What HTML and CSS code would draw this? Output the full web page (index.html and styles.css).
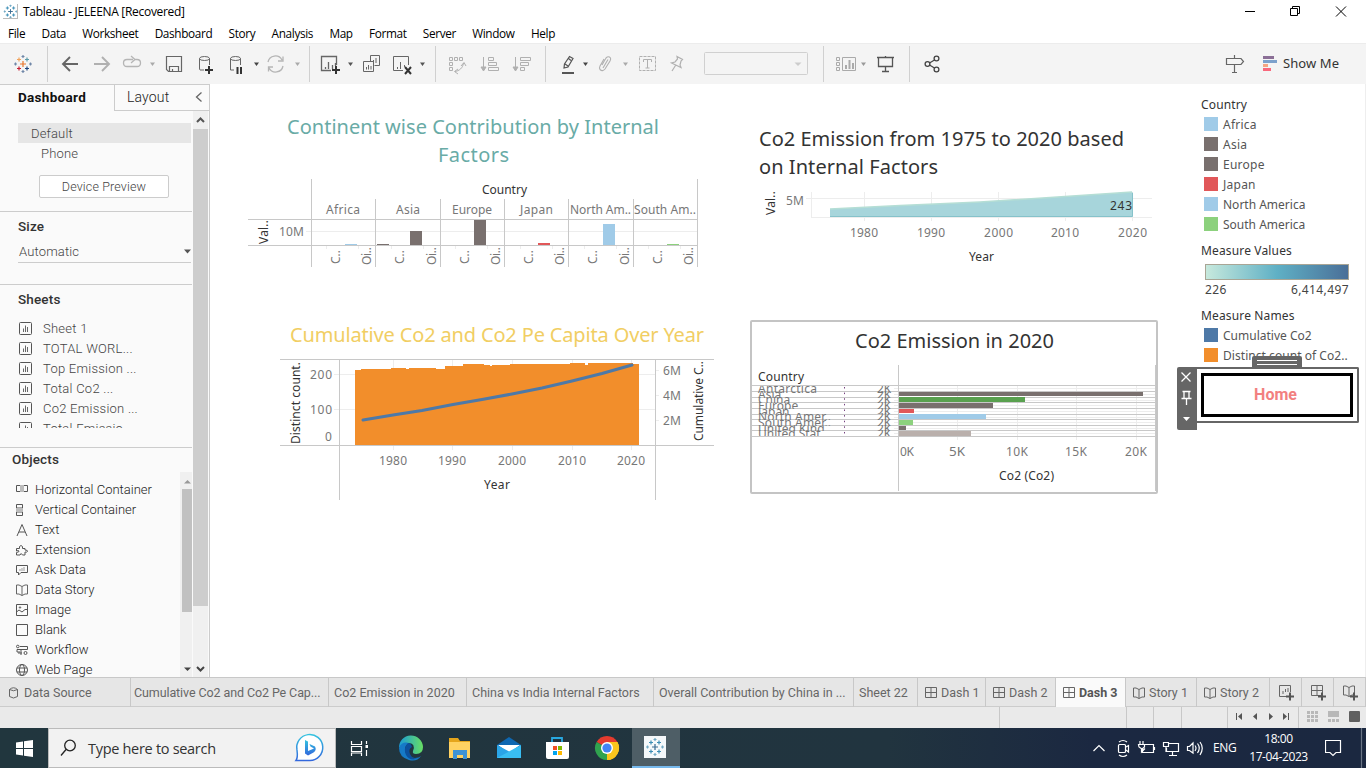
FILE: index.html
```html
<!DOCTYPE html>
<html lang="en">
<head>
<meta charset="utf-8">
<title>Tableau - JELEENA [Recovered]</title>
<link rel="stylesheet" href="styles.css">
</head>
<body>
<svg class="defs" width="0" height="0">
  <symbol id="sheet" viewBox="0 0 14 14"><rect x=".5" y=".5" width="12" height="12" rx="1" fill="none" stroke="#555"/><path d="M4.5 6.5V10M6.5 3.500V10M8.500 5V10" stroke="#666" fill="none"/></symbol>
  <symbol id="dash" viewBox="0 0 12 12"><path d="M.5.5H11.500V10.500H.5ZM6 .5V10.500M.5 5.500H11.500" fill="none" stroke="#666"/></symbol>
  <symbol id="story" viewBox="0 0 12 12"><path d="M.5 1H3L6 2.500 9 1H11.500V10H9L6 11.500 3 10H.5ZM6 2.500V11.500" fill="none" stroke="#666"/></symbol>
  <symbol id="flake" viewBox="0 0 18 18"><g stroke-width="1.200"><path d="M6 9H12M9 6V12" stroke="var(--c1)"/><path d="M3 4.500H7M5 2.500V6.500" stroke="var(--c2)"/><path d="M11 4.500H15M13 2.500V6.500" stroke="var(--c3)"/><path d="M3 13.500H7M5 11.500V15.500" stroke="var(--c4)"/><path d="M11 13.500H15M13 11.500V15.500" stroke="var(--c5)"/><path d="M7.500 1.500H10.500M9 0V3M7.500 16.500H10.500M9 15V18M0 9H3M1.500 7.500V10.500M15 9H18M16.500 7.500V10.500" stroke="var(--c6)"/></g></symbol>
</svg>
<div class="app">
  <header class="titlebar">
    <svg class="app-icon blue" width="15" height="15"><use href="#flake" x=".5" y=".5" width="14" height="14"/></svg>
    <span>Tableau - JELEENA [Recovered]</span>
    <svg class="win-controls" width="110" height="22" viewBox="1240 0 110 22" fill="none" stroke="#000"><path d="M1245 10.500H1255M1290.500 7.500H1297.500V14.500H1290.500ZM1292.500 7.500V5.500H1299.500V12.500H1297.500M1336 5.500L1346 15.500M1346 5.500L1336 15.500"/></svg>
  </header>
  <nav class="menu"><span>File</span><span>Data</span><span>Worksheet</span><span>Dashboard</span><span>Story</span><span>Analysis</span><span>Map</span><span>Format</span><span>Server</span><span>Window</span><span>Help</span></nav>
  <div class="toolbar">
    <div class="group g0"><svg class="multi" width="18" height="18"><use href="#flake" width="18" height="18"/></svg></div>
    <svg class="group" width="262" height="36" viewBox="48 46 261 36" fill="none" stroke="#666">
      <path d="M78 64H63M70 57L63 64L70 71" stroke-width="1.900"/><path d="M94 64H109M102 57L109 64L102 71" stroke="#b0b0b0" stroke-width="1.900"/>
      <path d="M133 59.500H127Q123.500 59.500 123.500 63T127 66.500H137Q140.500 66.500 140.500 63T137 59.500H135M131 56L135 59.500L131 63" stroke="#b5b5b5" stroke-width="1.300"/>
      <path d="M166.500 56.500H181.500V71.500H168.500L166.500 69.500ZM169.500 71.500V66.500H178.500V71.500M172.500 69V71.500" stroke-width="1.200"/>
      <path d="M204 70H200Q199.500 70 199.500 68V58.500M209.500 58.500V65" /><ellipse cx="204.500" cy="58.500" rx="5" ry="2"/><path d="M205 70H213M209 66V74" stroke="#333" stroke-width="2"/>
      <path d="M234 70H230.500V58.500M240.500 58.500V65"/><ellipse cx="235.500" cy="58.500" rx="5" ry="2"/><path d="M237.500 67V74M241 67V74" stroke="#333" stroke-width="2"/>
      <path d="M268 62A7.500 7.500 0 0 1 282 60M283 66A7.500 7.500 0 0 1 269 68M278 61H283V56.500M273 67H268.500V71.500" stroke="#b5b5b5" stroke-width="1.300"/>
      <g fill="#aaa" stroke="none"><path d="M150 62.500H155L152.500 66Z"/><path d="M295 62.500H300L297.500 66Z"/><path d="M254 62.500H259L256.500 66Z" fill="#444"/></g>
    </svg>
    <svg class="group" width="126" height="36" viewBox="310 46 125 36" fill="none" stroke="#666">
      <path d="M331 70.500H321.500V56.500H336.500V65M325.500 67V69M328.500 62V69M332.500 65V69M335.500 63V66" stroke-width="1.300"/><path d="M332 70H340M336 66V74" stroke="#333" stroke-width="2"/>
      <path d="M370.500 61V55.500H379.500V65.500H374.500M363.500 61.500H373.500V71.500H363.500ZM366.500 67V69.500M368.500 65V69.500M371 66V69.500M373.500 60V62M376 58V63" />
      <path d="M403 70.500H393.500V56.500H408.500V65M397.500 67V69M400.500 62V69M404.500 65V67"/><path d="M405 67L411 74M411 67L405 74" stroke="#333" stroke-width="2"/>
      <path d="M348 62.500H353L350.500 66ZM420 62.500H425L422.500 66Z" fill="#555" stroke="none"/>
    </svg>
    <svg class="group" width="110" height="36" viewBox="436 46 109 36" fill="none" stroke="#b0b0b0">
      <path d="M449.500 57.500H452.500V60.500H449.500ZM454.500 57.500H457.500V60.500H454.500ZM459.500 57.500H462.500V60.500H459.500ZM449.500 62.500H452.500V65.500H449.500ZM449.500 67.500H452.500V70.500H449.500ZM463.500 63C463 68 459 71 455 71.500M461 66L464 62.500L466 66M458 69L454.500 71.500L458 74"/>
      <path d="M483.500 57V70M488.500 57.500H493.500V60.500H488.500ZM488.500 62.500H496.500V65.500H488.500ZM488.500 67.500H498.500V70.500H488.500ZM515.500 57V70M520.500 57.500H530.500V60.500H520.500ZM520.500 62.500H528.500V65.500H520.500ZM520.500 67.500H524.500V70.500H520.500Z"/><path d="M481 67H486L483.500 71ZM513 67H518L515.500 71Z" fill="#b0b0b0"/>
    </svg>
    <svg class="group" width="278" height="36" viewBox="546 46 277 36" fill="none" stroke="#b0b0b0">
      <path d="M564 68L564.500 64L569.500 56.500L573 58.500L568 67ZM565 64L568 66M568.500 58.500L571 60.500" stroke="#555" stroke-width="1.200"/><path d="M562 73H574" stroke="#555" stroke-width="2"/>
      <path d="M602 65L606 58Q608.500 55.500 610.500 58Q611 59 610 61L605 69Q602.500 72 600 69.500Q599 68 600 66L604 59M603 68L608 59.500" stroke-width="1.100"/>
      <rect x="639.500" y="56.500" width="16" height="14" stroke-dasharray="3 1"/><path d="M643.500 62V59.500H651.500V62M647.500 59.500V68M645.500 68H649.500"/>
      <path d="M677 56.500L682.500 59.500L681 61L680 65L681 67.500L671.500 63L675 62L677.500 59ZM675.500 65.500L672 71" stroke-width="1.200"/>
      <rect x="704.500" y="52.500" width="103" height="22" rx="1" stroke="#d0d0d0"/><path d="M794.500 62.500H801.500L798 66Z" fill="#ccc" stroke="none"/>
      <path d="M583 62.500H588L585.500 66Z" fill="#444" stroke="none"/><path d="M623 62.500H628L625.500 66Z" fill="#aaa" stroke="none"/>
    </svg>
    <svg class="group" width="86" height="36" viewBox="824 46 85 36" fill="none" stroke="#aaa">
      <path d="M836.500 57.500H839.500V60.500H836.500ZM836.500 62.500H839.500V65.500H836.500ZM836.500 67.500H839.500V70.500H836.500ZM842.500 57.500H855.500V70.500H842.500Z"/><path d="M846 69V65M849.500 69V60M853 69V63" stroke-width="2"/><path d="M861 62.500H866L863.500 66Z" fill="#999" stroke="none"/>
      <path d="M877 57.500H894M885.500 56V58M878.500 58V66.500H892.500V58M885.500 67V71.500M882 71.500H889" stroke="#555" stroke-width="1.300"/>
    </svg>
    <svg class="group share" width="60" height="36" viewBox="910 46 60 36" fill="none" stroke="#444" stroke-width="1.300"><circle cx="927.500" cy="64" r="2.400"/><circle cx="936.500" cy="58.500" r="2.400"/><circle cx="936.500" cy="69.500" r="2.400"/><path d="M929.500 63L934.500 60M929.500 65L934.500 68"/></svg>
    <svg class="show-me" width="56" height="36" viewBox="1224 46 56 36"><path d="M1226.500 58.500H1241L1243.500 61.500L1241 64.500H1226.500ZM1234.500 55V58M1234.500 65V72.500M1232 72.500H1237" fill="none" stroke="#666" stroke-width="1.200"/><path d="M1263 56h11v3h-11z" fill="#8b6f96"/><path d="M1263 60h14v3h-14z" fill="#7ca1cc"/><path d="M1263 64h5v3h-5z" fill="#f4a582"/><path d="M1263 68h8v3h-8z" fill="#f9687c"/></svg>
    <span class="show-label">Show Me</span>
  </div>
  <main class="workspace">
    <aside class="pane">
      <div class="tabs"><b>Dashboard</b><span>Layout</span><svg width="8" height="12"><path d="M6.500 1.500L1.500 6L6.500 10.500" fill="none" stroke="#666" stroke-width="1.300"/></svg></div>
      <div class="pane-body">
        <div class="pane-content">
          <section class="devices"><div class="default">Default</div><div class="phone">Phone</div><div class="preview">Device Preview</div></section>
          <section class="size"><h2>Size</h2><div class="select"><span>Automatic</span><svg width="8" height="5"><path d="M1 .5H8L4.500 4.500Z" fill="#555"/></svg></div></section>
          <section class="sheets"><h2>Sheets</h2>
            <ul>
              <li><svg><use href="#sheet"/></svg><span>Sheet 1</span></li><li><svg><use href="#sheet"/></svg><span>TOTAL WORL...</span></li><li><svg><use href="#sheet"/></svg><span>Top Emission ...</span></li><li><svg><use href="#sheet"/></svg><span>Total Co2 ...</span></li><li><svg><use href="#sheet"/></svg><span>Co2 Emission ...</span></li><li><svg><use href="#sheet"/></svg><span>Total Emissio...</span></li>
            </ul>
          </section>
          <section class="objects"><h2>Objects</h2>
            <div class="object-scroll">
              <ul>
                <li><svg viewBox="0 0 12 12"><path d="M.5 1.500H4.500V7.500H.5ZM7.500 1.500H11.500V7.500H7.500Z"/><path d="M4 1h4v7H4z" fill="#bbb" stroke="none"/></svg>Horizontal Container</li>
                <li><svg viewBox="0 0 12 12"><path d="M.5.5H6.500V4H.5ZM.5 8H6.500V11.500H.5Z"/><path d="M0 4h7v4H0z" fill="#bbb" stroke="none"/></svg>Vertical Container</li>
                <li><svg viewBox="0 0 12 12"><path d="M1 12L6 .5L11 12M3 8H9"/></svg>Text</li>
                <li><svg viewBox="0 0 12 12"><path d="M.5 4.500H3.500V2.500Q5 .5 6.500 2.500V4.500H9V6Q12 6 11.500 7.500Q11 8.500 9 8V11H6.500Q5 8 4 11H.5V8.500Q3.500 8 3 7Q2 6 .5 7Z"/></svg>Extension</li>
                <li><svg viewBox="0 0 12 12"><path d="M.5 1.500H11.500V8.500H5L2.500 11V8.500H.5Z"/><path d="M4 7V5M6 7V4M8 7V3" stroke="#999"/></svg>Ask Data</li>
                <li><svg viewBox="0 0 12 12"><use href="#story" width="12" height="12"/></svg>Data Story</li>
                <li><svg viewBox="0 0 12 12"><path d="M.5 .5H11.500V11.500H.5ZM.5 8L3 6L6 8L9 5.500H11"/><circle cx="4" cy="3.500" r=".7"/></svg>Image</li>
                <li><svg viewBox="0 0 12 12"><path d="M.5 .5H11.500V11.500H.5Z"/></svg>Blank</li>
                <li><svg viewBox="0 0 12 12"><circle cx="1.800" cy="2.500" r="1.300"/><path d="M4 2.500H11.500V5.500H1V8H4M5 6V11M2 9H6"/><circle cx="9.500" cy="9" r="1.500"/></svg>Workflow</li>
                <li><svg viewBox="0 0 12 12"><circle cx="6" cy="6" r="5.500"/><ellipse cx="6" cy="6" rx="2.500" ry="5.500"/><path d="M1 4H11M1 8H11"/></svg>Web Page</li>
              </ul>
              <div class="scroll inner"><svg width="11" height="17"><path d="M4 11.500H11L7.500 8Z" fill="#999"/></svg><i></i><svg width="11" height="17"><path d="M4 8.500H11L7.500 12Z" fill="#444"/></svg></div>
            </div>
          </section>
        </div>
        <div class="scroll outer"><svg width="15" height="18"><path d="M4 11L7.500 7.500L11 11" fill="none" stroke="#555" stroke-width="2"/></svg><i></i><svg width="15" height="17"><path d="M4 7L7.500 10.500L11 7" fill="none" stroke="#444" stroke-width="2"/></svg></div>
      </div>
    </aside>
    <div class="dashboard">
      <svg class="chart" width="520" height="226" viewBox="210 84 520 226">
        <g class="title" fill="#69aba6"><text x="287" y="134" textLength="372">Continent wise Contribution by Internal</text><text x="438" y="162" textLength="71">Factors</text></g>
        <path class="grid" d="M306 231.500H697M326.500 246V249M358.500 246V249M391.500 246V249M423.500 246V249M455.500 246V249M487.500 246V249M520.500 246V249M552.500 246V249M584.500 246V249M616.500 246V249M648.500 246V249M680.500 246V249"/>
        <path d="M345 244h12v1h-12z M603 224h12v21h-12z" fill="#a0cbe8"/><path d="M377 244h12v1h-12z M410 231h12v14h-12z M474 220h12v25h-12z" fill="#79706e"/><path d="M538 243h12v2h-12z" fill="#e15759"/><path d="M667 244h12v1h-12z" fill="#8cd17d"/>
        <path class="axis" d="M311.500 179V267M697.500 179V267M375.500 199V267M440.500 199V267M504.500 199V267M568.500 199V267M633.500 199V267M248 219.500H698M248 245.500H698"/>
        <text class="dark" x="482" y="194" textLength="45">Country</text>
        <text x="326" y="214" textLength="34">Africa</text><text x="396" y="214" textLength="24">Asia</text><text x="452" y="214" textLength="40">Europe</text><text x="520" y="214" textLength="33">Japan</text><text x="570" y="214" textLength="61">North Am..</text><text x="634" y="214" textLength="62">South Am..</text>
        <text x="279" y="236" textLength="25">10M</text><text class="dark" transform="translate(268 244)rotate(-90)" textLength="24">Val..</text>
        <g><text transform="translate(340 264)rotate(-90)" textLength="14">C..</text><text transform="translate(371 265)rotate(-90)" textLength="18">Oi..</text><text transform="translate(404 264)rotate(-90)" textLength="14">C..</text><text transform="translate(436 265)rotate(-90)" textLength="18">Oi..</text><text transform="translate(469 264)rotate(-90)" textLength="14">C..</text><text transform="translate(500 265)rotate(-90)" textLength="18">Oi..</text><text transform="translate(533 264)rotate(-90)" textLength="14">C..</text><text transform="translate(564 265)rotate(-90)" textLength="18">Oi..</text><text transform="translate(597 264)rotate(-90)" textLength="14">C..</text><text transform="translate(629 265)rotate(-90)" textLength="18">Oi..</text><text transform="translate(662 264)rotate(-90)" textLength="14">C..</text><text transform="translate(693 265)rotate(-90)" textLength="18">Oi..</text></g>
      </svg>
      <svg class="chart" width="461" height="226" viewBox="730 84 461 226">
        <g class="title" fill="#333"><text x="759" y="146" textLength="365">Co2 Emission from 1975 to 2020 based</text><text x="759" y="174" textLength="179">on Internal Factors</text></g>
        <path class="grid" d="M806 198.500H1152M811 217.500H1152M811.500 192V217M864.500 192V221M931.500 192V221M998.500 192V221M1065.500 192V221M1132.500 192V221"/>
        <path d="M830 209L900 205.500L980 202L1050 197.500L1132.500 192V217H830Z" fill="#a7d5db"/><path d="M830 209L900 205.500L980 202L1050 197.500L1132 192" fill="none" stroke="#b5ded5" stroke-width="1.500"/><path d="M830 216.500H1132.500V193" fill="none" stroke="#86c2ca"/>
        <text x="786" y="205" textLength="18">5M</text><text class="dark" x="1110" y="210" textLength="22">243</text><text class="dark" transform="translate(775 215)rotate(-90)" textLength="24">Val..</text>
        <text x="850" y="237" textLength="28">1980</text><text x="917" y="237" textLength="28">1990</text><text x="984" y="237" textLength="29">2000</text><text x="1051" y="237" textLength="28">2010</text><text x="1118" y="237" textLength="29">2020</text><text class="dark" x="969" y="261" textLength="25">Year</text>
      </svg>
      <svg class="chart" width="520" height="367" viewBox="210 310 520 367">
        <text class="title" fill="#f1ce63" x="290" y="342" textLength="414">Cumulative Co2 and Co2 Pe Capita Over Year</text>
        <path class="grid" d="M334 374.500H655M334 409.500H655M655 370.500H659M655 395.500H659M655 420.500H659M393.500 360V450M452.500 360V450M512.500 360V450M572.500 360V450M631.500 360V450"/>
        <path d="M355 445V370H361V369H391V368H406V369H409V368H436V369H445V366H463V364H484V365H490V366H492V365H510V364H570V363H585V365H588V363H633V364H639V445Z" fill="#f28e2b"/>
        <path d="M363 420L393 415L422 410.500L453 404.500L482 399.500L512 394L542 388L572 381L602 373.500L632 365" fill="none" stroke="#4e79a7" stroke-width="3" stroke-linecap="round"/>
        <path class="axis" d="M280 359.500H714M280 445.500H714M339.500 360V500M655.500 360V500"/>
        <text x="310" y="379" textLength="22">200</text><text x="310" y="414" textLength="22">100</text><text x="325" y="441">0</text><text x="663" y="375" textLength="18">6M</text><text x="663" y="400" textLength="18">4M</text><text x="663" y="425" textLength="18">2M</text>
        <text x="379" y="465" textLength="28">1980</text><text x="438" y="465" textLength="28">1990</text><text x="498" y="465" textLength="28">2000</text><text x="558" y="465" textLength="28">2010</text><text x="617" y="465" textLength="28">2020</text><text class="dark" x="484" y="489" textLength="26">Year</text>
        <text class="dark" transform="translate(300 444)rotate(-90)" textLength="82">Distinct count.</text><text class="dark" transform="translate(703 441)rotate(-90)" textLength="80">Cumulative C..</text>
      </svg>
      <svg class="chart" width="461" height="367" viewBox="730 310 461 367">
        <defs><clipPath id="r0"><path d="M752 386h146v7H752z"/></clipPath><clipPath id="r1"><path d="M752 391h146v7H752z"/></clipPath><clipPath id="r2"><path d="M752 397h146v6H752z"/></clipPath><clipPath id="r3"><path d="M752 402h146v7H752z"/></clipPath><clipPath id="r4"><path d="M752 408h146v6H752z"/></clipPath><clipPath id="r5"><path d="M752 413h146v7H752z"/></clipPath><clipPath id="r6"><path d="M752 419h146v7H752z"/></clipPath><clipPath id="r7"><path d="M752 425h146v6H752z"/></clipPath><clipPath id="r8"><path d="M752 430h146v6H752z"/></clipPath></defs>
        <rect x="751" y="321" width="406" height="172" rx="1" fill="#fff" stroke="#c4c4c4" stroke-width="2"/>
        <text class="title" x="855" y="348" textLength="199" fill="#333">Co2 Emission in 2020</text><text class="dark" x="758" y="381" textLength="46">Country</text>
        <path class="grid" d="M957.500 386V440M1017.500 386V440M1076.500 386V440M1136.500 386V440M894 388.500H1155M894 394.500H1155M894 400.500H1155M894 405.500H1155M894 411.500H1155M894 417.500H1155M894 422.500H1155M894 428.500H1155M894 433.500H1155"/>
        <path class="axis" d="M752 385.500H1155M752 391.500H1155M752 397.500H1155M752 402.500H1155M752 408.500H1155M752 414.500H1155M752 419.500H1155M752 425.500H1155M752 430.500H1155M752 436.500H1155M898.500 365V491M1155.500 365V491"/>
        <path d="M899 392h244v4H899zM899 403h94v5H899zM899 426h7v4H899z" fill="#79706e"/><path d="M899 397h126v5H899z" fill="#59a14f"/><path d="M899 409h15v4H899z" fill="#e15759"/><path d="M899 414h87v5H899z" fill="#a0cbe8"/><path d="M899 420h14v5H899z" fill="#8cd17d"/><path d="M899 431h72v5H899z" fill="#bab0ac"/>
        <g><g clip-path="url(#r0)"><text x="758" y="393" textLength="59">Antarctica</text><text x="877" y="393">2K</text></g><g clip-path="url(#r1)"><text x="758" y="399">Asia</text><text x="877" y="399">2K</text></g><g clip-path="url(#r2)"><text x="758" y="404">China</text><text x="877" y="404">2K</text></g><g clip-path="url(#r3)"><text x="758" y="410">Europe</text><text x="877" y="410">2K</text></g><g clip-path="url(#r4)"><text x="758" y="416">Japan</text><text x="877" y="416">2K</text></g><g clip-path="url(#r5)"><text x="758" y="421" textLength="73">North Amer..</text><text x="877" y="421">2K</text></g><g clip-path="url(#r6)"><text x="758" y="427" textLength="73">South Amer..</text><text x="877" y="427">2K</text></g><g clip-path="url(#r7)"><text x="758" y="433" textLength="73">United King..</text><text x="877" y="433">2K</text></g><g clip-path="url(#r8)"><text x="758" y="438" textLength="69">United Stat..</text><text x="877" y="438">2K</text></g></g>
        <path d="M844.500 387V434" stroke="#764280" stroke-dasharray="1.500 4.120" fill="none"/>
        <text x="900" y="456" textLength="14">0K</text><text x="949" y="456" textLength="16" lengthAdjust="spacingAndGlyphs">5K</text><text x="1006" y="456" textLength="22">10K</text><text x="1065" y="456" textLength="22">15K</text><text x="1125" y="456" textLength="22">20K</text><text class="dark" x="999" y="480" textLength="55">Co2 (Co2)</text>
      </svg>
      <div class="legend">
        <h3>Country</h3>
        <ul><li><i class="sky"></i>Africa</li><li><i class="brown"></i>Asia</li><li><i class="brown"></i>Europe</li><li><i class="red"></i>Japan</li><li class="tight"><i class="sky"></i>North America</li><li class="tight"><i class="green"></i>South America</li></ul>
        <h3 class="mv">Measure Values</h3><div class="ramp"></div><div class="range"><span>226</span><span>6,414,497</span></div>
        <h3 class="mn">Measure Names</h3>
        <ul><li class="tight"><i class="navy"></i>Cumulative Co2</li><li class="full"><i class="orange"></i>Distinct count of Co2..</li></ul>
        <div class="floating"><svg width="50" height="13"><rect width="50" height="13" rx="2" fill="#666"/><path d="M5 4.500H45M5 8.500H45" stroke="#fff"/></svg>
          <div class="floating-row"><svg width="20" height="63"><path d="M2 0H20V63H2Q0 63 0 61V2Q0 0 2 0Z" fill="#666"/><path d="M4.500 5.500L13.500 14.500M13.500 5.500L4.500 14.500M5.500 24.500H13.500M7 24.500V31.500M12 24.500V31.500M4.500 31.500H14.500M9.500 32V38" fill="none" stroke="#fff" stroke-width="1.300"/><path d="M6 50H13L9.500 54Z" fill="#fff"/></svg><div class="home-wrap"><div class="home">Home</div></div></div>
        </div>
      </div>
    </div>
  </main>
  <div class="sheet-tabs">
    <span class="source"><svg width="10" height="12"><path d="M.5 2.500V9.500Q4.500 12.500 8.500 9.500V2.500Q4.500-1 .5 2.500Q4.500 5 8.500 2.500" fill="none" stroke="#666"/></svg>Data Source</span><span class="first">Cumulative Co2 and Co2 Pe Cap...</span><span>Co2 Emission in 2020</span><span>China vs India Internal Factors</span><span>Overall Contribution by China in ...</span><span>Sheet 22</span>
    <span class="ico"><svg width="12" height="12"><use href="#dash"/></svg>Dash 1</span><span class="ico"><svg width="12" height="12"><use href="#dash"/></svg>Dash 2</span><span class="ico active"><svg width="12" height="12"><use href="#dash"/></svg>Dash 3</span><span class="ico"><svg width="12" height="12"><use href="#story"/></svg>Story 1</span><span class="ico"><svg width="12" height="12"><use href="#story"/></svg>Story 2</span>
    <span class="new"><svg width="16" height="16"><path d="M7 11.500H.5V.5H11.500V7M4 9V6M6.500 7V4M9 7V3" fill="none" stroke="#666"/><path d="M7 11.500H15M11 7.500V15.500" stroke="#555" stroke-width="2"/></svg></span><span class="new"><svg width="16" height="16"><use href="#dash" width="12" height="12"/><path d="M7 11.500H15M11 7.500V15.500" stroke="#555" stroke-width="2"/></svg></span><span class="new"><svg width="16" height="16"><use href="#story" width="12" height="12"/><path d="M7 11.500H15M11 7.500V15.500" stroke="#555" stroke-width="2"/></svg></span>
  </div>
  <div class="status"><span></span><span></span><span></span><span></span><span></span><span><svg width="70" height="20" viewBox="1228 708 70 20" fill="#555"><path d="M1236 714h1v7h-1zM1242 714V721L1238 717.500ZM1257 714V721L1253 717.500ZM1269 714V721L1273 717.500ZM1283 714V721L1287 717.500ZM1288 714h1v7h-1z"/></svg></span><svg width="67" height="20" viewBox="1299 708 67 20" fill="#b8b8b8"><path d="M1307 712h3v3h-3zM1311 712h3v3h-3zM1315 712h3v3h-3zM1307 716h3v3h-3zM1311 716h3v3h-3zM1315 716h3v3h-3zM1307 720h3v3h-3zM1311 720h3v3h-3zM1315 720h3v3h-3zM1328 712h11v6h-11zM1328 720h3v3h-3zM1332 720h3v3h-3zM1336 720h3v3h-3z"/><rect x="1349" y="712" width="11" height="11" rx="1" fill="#606060"/></svg></div>
  <footer class="taskbar">
    <div class="start"><svg width="17" height="17"><path d="M0 2.500L7 1.500V8H0ZM8 1.300L17 0V8H8ZM0 9H7V15.500L0 14.500ZM8 9H17V17L8 15.700Z" fill="#fff"/></svg></div>
    <div class="search"><svg width="17" height="18" fill="none" stroke="#222" stroke-width="1.300"><circle cx="10" cy="6.500" r="5.300"/><path d="M6 10.500L1 16.500"/></svg><span>Type here to search</span>
      <svg class="bing" width="30" height="32"><defs><linearGradient id="bg" x2="0" y2="1"><stop stop-color="#35c3df"/><stop offset="1" stop-color="#3268dd"/></linearGradient></defs><path d="M3 18A13 13 0 1 1 16 28.500H2Q4 26 3 18" fill="#fff" stroke="url(#bg)" stroke-width="1.500"/><path d="M11 8L14 9.500V19L20 16.500L16.500 14.500L15.500 12L21 14.500Q23 18 19.500 20.500L14 23.500L11 21.500Z" fill="url(#bg)"/></svg></div>
    <svg class="pins" width="296" height="40" viewBox="336 728 296 40">
      <path d="M351.500 741V744.500H361.500V741M351.500 756V753H361.500V756M351.500 746.500H361.500V751.500H351.500ZM366.500 741V744M366.500 750V756" fill="none" stroke="#fff" stroke-width="1.200"/><path d="M365.500 745h2.500v3h-2.500z" fill="#fff"/>
      <defs><linearGradient id="eg" x2="1"><stop stop-color="#1a9bd7"/><stop offset="1" stop-color="#68df63"/></linearGradient></defs>
      <path d="M399 748A12 12 0 0 1 423 747Q423 754 416 754Q412 754 413 751Q416 743 408 743Q402 743 399 748" fill="url(#eg)"/><path d="M399 748Q402 741 409 743Q405 745 405 750Q406 758 415 758Q419 758 421 756Q417 762 409 760Q399 757 399 748" fill="#167ac7"/><path d="M408 743Q403 748 406 755Q410 762 419 758Q413 760 410 754Q408 749 412 747Q411 743 408 743" fill="#0c519e"/>
      <path d="M449 738h9l2 3h10v17h-21z" fill="#e5a51c"/><path d="M449 742h21v16h-21z" fill="#ffd262"/><path d="M453 750h14v9h-4v-4h-6v4h-4z" fill="#3e93d4"/>
      <path d="M497 745L509 737L521 745V758H497Z" fill="#0e67b1"/><path d="M498 745H520L509 753Z" fill="#fff"/><path d="M497 745L521 758H497Z" fill="#2aa5e8"/><path d="M521 745L497 758H521Z" fill="#39bef3"/>
      <path d="M552 742V738H562V742" fill="none" stroke="#28a8e0" stroke-width="1.800"/><path d="M546 742H569V757Q569 759 567 759H548Q546 759 546 757Z" fill="#fff"/><path d="M553 746h4v4h-4z" fill="#f25022"/><path d="M558 746h4v4h-4z" fill="#7fba00"/><path d="M553 751h4v4h-4z" fill="#00a4ef"/><path d="M558 751h4v4h-4z" fill="#ffb900"/>
      <path d="M607 748L596.600 742A12 12 0 0 1 617.400 742Z" fill="#e53b2e"/><path d="M607 748L617.400 742A12 12 0 0 1 607 760Z" fill="#fbc51d"/><path d="M607 748L607 760A12 12 0 0 1 596.600 742Z" fill="#30a34f"/><path d="M607 742H617.400A12 12 0 0 1 607 760L612 751Z" fill="#fbc51d"/><circle cx="607" cy="748" r="6" fill="#fff"/><circle cx="607" cy="748" r="4.600" fill="#4285f4"/>
    </svg>
    <div class="running"><svg class="blue" width="22" height="22"><rect width="22" height="22" fill="#f5f8fa"/><use href="#flake" x="2" y="2" width="18" height="18"/></svg></div>
    <svg class="tray" width="112" height="40" viewBox="1092 728 112 40" fill="none" stroke="#fff" stroke-width="1.200"><path d="M1093.500 751L1099 745.500L1104.500 751"/><rect x="1118.500" y="744.500" width="7" height="8" rx="1"/><path d="M1126 747L1128.500 745.500V752L1126 750M1119 742Q1123 739 1127 742M1119 755Q1123 758 1127 755"/><path d="M1145 744.500H1153.500V752.500H1142.500V748M1154.500 747V750M1140 741V744M1143 741V744M1138.500 744.500H1144.500V747L1142 749L1139 747ZM1141.500 749V752L1145 748.500"/><path d="M1169 743.500H1178.500V751.500H1166.500V748M1172.500 752V755.500M1169 755.500H1177M1163.500 742.500H1168.500V746.500H1163.500ZM1166 747V752"/><path d="M1187.500 746.500H1189.500L1193 743V753L1189.500 750.500H1187.500ZM1195 745.500Q1197 748 1195 751M1197.500 743.500Q1201 748 1197.500 753M1200 742Q1204.500 748 1200 755"/></svg>
    <span class="lang">ENG</span><div class="clock"><span>18:00</span><span>17-04-2023</span></div>
    <svg class="notice" width="41" height="40" viewBox="1325 728 41 40" fill="none" stroke="#fff" stroke-width="1.200"><path d="M1325.500 740.500H1340.500V752.500H1336L1333 755.500L1330 752.500H1325.500Z"/><path d="M1361.500 728V768" stroke="#6a7585"/></svg>
  </footer>
</div>
</body>
</html>
```
FILE: styles.css
```css
* { box-sizing: border-box; }
body { margin: 0; width: 1366px; height: 768px; overflow: hidden; background: #fff; color: #333; font: 12px/20px "Noto Sans", sans-serif; }
svg { display: block; flex-shrink: 0; }
ul { list-style: none; margin: 0; padding: 0; }
h2, h3 { margin: 0; }
.defs { position: absolute; }
.app { display: grid; grid-template-rows: 23px 20px 41px 593px 30px 21px 40px; height: 768px; }
.blue { --c1: #386b91; --c2: #3b8db5; --c3: #3b8db5; --c4: #3b8db5; --c5: #3b8db5; --c6: #72a9c4; }
.multi { --c1: #e8762c; --c2: #f0a35c; --c3: #5c9ba8; --c4: #c72035; --c5: #1f457e; --c6: #7087a8; }
.titlebar { display: flex; align-items: center; color: #000; font: 12px "Open Sans", sans-serif; letter-spacing: -.3px; }
.app-icon { margin: 0 5px 0 3px; border-right: 1px solid #bbb; border-bottom: 1px solid #bbb; }
.win-controls { margin-left: auto; margin-right: 16px; }
.menu { display: flex; gap: 16.3px; padding-left: 8px; color: #000; font: 11.8px/21px "Open Sans", sans-serif; letter-spacing: -.36px; }
.toolbar { display: flex; align-items: flex-start; background: #f4f4f4; border-top: 1px solid #ececec; padding-top: 2px; }
.group { border-right: 1px solid #d0d0d0; height: 36px; }
.g0 { width: 48px; padding: 9px 0 0 14px; }
.share { border: 0; }
.show-me { margin-left: auto; }
.show-label { width: 83px; margin-left: 3px; padding-top: 7px; font-size: 13px; letter-spacing: .1px; }
.workspace { display: grid; grid-template-columns: 210px 1156px; overflow: hidden; }
.pane { border-right: 1px solid #ccc; background: #fafafa; color: #444; overflow: hidden; font-family: Roboto, sans-serif; font-size: 13px; font-weight: 300; letter-spacing: .15px; }
.tabs { height: 27px; display: flex; line-height: 25px; color: #222; font-size: 14px; font-weight: 400; border-top: 1px solid #ccc; }
.tabs b { width: 114px; padding-left: 18px; color: #111; letter-spacing: .3px; font-size: 13.5px; }
.tabs span { width: 81px; padding-left: 12px; border-left: 1px solid #ccc; border-bottom: 1px solid #ccc; font-weight: 300; }
.tabs svg { width: 14px; height: 26px; padding-top: 6px; border-bottom: 1px solid #ccc; }
.pane-body { display: flex; height: 566px; }
.pane-content { width: 192px; margin-right: 1px; }
.pane section { border-bottom: 1px solid #ccc; }
.pane h2 { font: 500 13.5px/20px Roboto, sans-serif; color: #333; }
.devices { height: 101px; padding: 12px 1px 0 18px; }
.default { background: #e6e6e6; height: 20px; padding-left: 13px; line-height: 22px; }
.phone { padding-left: 23px; height: 20px; line-height: 22px; }
.preview { width: 130px; height: 23px; margin: 12px 0 0 21px; border: 1px solid #ccc; border-radius: 2px; text-align: center; line-height: 21px; background: #fff; font-size: 12.5px; }
.size { height: 73px; padding: 4px 1px 0 18px; }
.select { display: flex; align-items: center; justify-content: space-between; height: 22px; margin-top: 5px; border-bottom: 1px solid #ccc; padding-left: 1px; line-height: 19px; }
.sheets { height: 163px; padding: 4px 0 0 19px; }
.sheets h2 { margin-left: -1px; }
.sheets ul { height: 109px; margin-top: 10px; overflow: hidden; }
.sheets li { display: flex; align-items: center; height: 20px; gap: 10px; white-space: nowrap; letter-spacing: .25px; }
.sheets li span { line-height: 22px; }
.sheets li svg { width: 14px; height: 14px; }
.pane .objects { height: 229px; padding: 1px 0 0 12px; border: 0; }
.object-scroll { display: flex; height: 205px; margin-top: 3px; }
.object-scroll ul { width: 168px; padding: 8px 0 0 4px; color: #222; letter-spacing: 0; }
.object-scroll li { height: 20px; display: flex; align-items: center; gap: 7px; }
.object-scroll li svg { width: 12px; height: 12px; fill: none; stroke: #555; }
.scroll { display: flex; flex-direction: column; background: #f0f0f0; }
.inner { width: 12px; }
.inner i { height: 123px; width: 10px; margin: 0 0 47px 2px; background: #c1c1c1; }
.outer { width: 15px; }
.outer i { height: 478px; margin-bottom: 54px; background: #cdcdcd; }
.dashboard { display: grid; grid-template-columns: 520px 461px 175px; grid-template-rows: 226px 367px; border-right: 1px solid #eee; }
.chart { font: 12px "Noto Sans", sans-serif; fill: #777; }
.chart .title { font-size: 20px; font-weight: 400; }
.chart .dark { fill: #333; }
.grid { stroke: #ededed; fill: none; }
.axis { stroke: #c8c8c8; fill: none; }
.legend { grid-column: 3; grid-row: 1 / 3; padding: 11px 0 0 10px; position: relative; }
.legend h3 { font: 400 12px/20px "Noto Sans", sans-serif; letter-spacing: .15px; }
.legend li { display: flex; align-items: center; gap: 5px; height: 20px; color: #555; letter-spacing: .25px; white-space: nowrap; }
.legend li.tight { letter-spacing: 0; }
.legend li.full { letter-spacing: .05px; }
.legend i { width: 14px; height: 14px; margin: -2px 0 0 3px; flex-shrink: 0; }
.sky { background: #a0cbe8; } .brown { background: #79706e; } .red { background: #e15759; } .green { background: #8cd17d; } .navy { background: #4e79a7; } .orange { background: #f28e2b; }
.legend .mv { margin-top: 6px; }
.ramp { width: 144px; height: 16px; margin: 3px 0 0 4px; border: 1px solid #a9a595; background: linear-gradient(90deg, #c7e9dd, #5fb0c5 50%, #4a6f98); }
.range { display: flex; justify-content: space-between; width: 144px; margin-left: 4px; color: #444; letter-spacing: .4px; }
.legend .mn { margin-top: 6px; }
.floating { position: absolute; left: -14px; top: 272px; width: 182px; }
.floating > svg { margin-left: 75px; }
.floating-row { display: flex; margin-top: -2px; align-items: flex-start; }
.home-wrap { width: 162px; height: 56px; border: 2px solid #666; border-left: 0; border-radius: 0 2px 2px 0; padding: 4px; background: #fff; }
.home { height: 44px; border: 3px solid #000; font: 700 16px/38px Roboto, sans-serif; padding-right: 3px; text-align: center; color: #f28080; }
.sheet-tabs { display: grid; grid-template-columns: 131px 198px 138px 187px 200px 64px 68px 70px 70px 71px 73px 32px 32px 32px; background: #e6e6e6; border-top: 1px solid #c8c8c8; border-bottom: 1px solid #ccc; font: 12.5px/29px Roboto, sans-serif; color: #666; }
.sheet-tabs span { border-right: 1px solid #c8c8c8; padding-left: 5px; white-space: nowrap; }
.sheet-tabs .first { padding-left: 3px; letter-spacing: -.1px; }
.sheet-tabs .source { display: flex; align-items: center; gap: 5px; padding-left: 9px; }
.sheet-tabs .ico { display: flex; align-items: center; gap: 4px; padding-left: 7px; }
.sheet-tabs .active { background: #fafafa; font-weight: 700; color: #555; }
.sheet-tabs .new { padding: 7px 0 0 9px; }
.status { display: grid; grid-template-columns: 1000px 127px 27px 28px 46px 71px 67px; background: #eaeaea; }
.status span { border-right: 1px solid #c8c8c8; }
.taskbar { display: flex; align-items: stretch; background: linear-gradient(90deg, #21363e, #21343f 65%, #1b2841 80%, #1b2840); color: #fff; }
.start { width: 48px; padding: 12px 0 0 16px; }
.search { display: flex; align-items: center; width: 288px; background: #f2f2f2; color: #333; border: 1px solid #bbb; font: 14.5px "Open Sans", sans-serif; letter-spacing: -.3px; padding-left: 11px; gap: 11px; }
.search .bing { margin: 0 11px 0 auto; }
.running { width: 48px; background: #4e5e66; border-bottom: 2px solid #76b9ed; padding: 8px 0 0 12px; }
.tray { margin-left: auto; }
.lang { width: 31px; margin-left: 9px; line-height: 40px; font-family: "Open Sans", sans-serif; letter-spacing: -.4px; }
.clock { display: flex; flex-direction: column; align-items: center; width: 69px; font: 12px/18px "Open Sans", sans-serif; letter-spacing: -.4px; padding-top: 2px; }
.notice { margin-left: 12px; }
```
